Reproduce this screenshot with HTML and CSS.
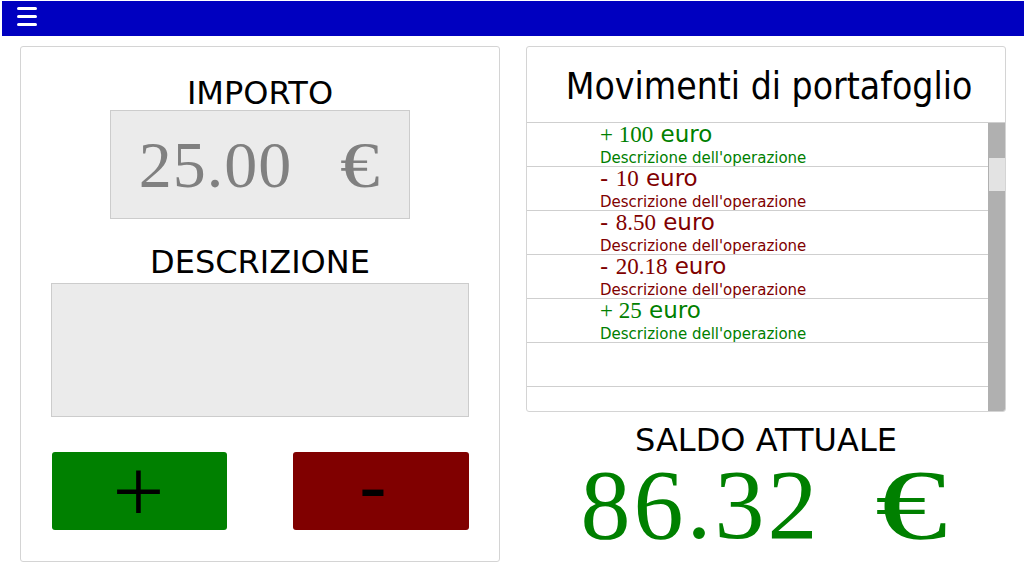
FILE: index.html
```html
<!DOCTYPE html>
<html lang="it">
<head>
<meta charset="utf-8">
<title>Portafoglio</title>
<link rel="stylesheet" href="styles.css">
</head>
<body>
<header class="topbar">
  <div class="menu"><span></span><span></span><span></span></div>
</header>
<main class="main">
  <section class="card left">
    <h2 class="label">IMPORTO</h2>
    <div class="amount-input"><span class="num">25.00</span><span class="cur">€</span></div>
    <h2 class="label desc-label">DESCRIZIONE</h2>
    <div class="desc-input"></div>
    <div class="buttons">
      <button class="btn plus">+</button>
      <button class="btn minus">-</button>
    </div>
  </section>
  <div class="right">
    <section class="card movements">
      <div class="mov-title">Movimenti di portafoglio</div>
      <div class="mov-body">
        <ul class="mov-list">
          <li class="in"><div class="amt"><span class="n">+ 100</span> euro</div><div class="desc">Descrizione dell'operazione</div></li>
          <li class="out"><div class="amt">- <span class="n">10</span> euro</div><div class="desc">Descrizione dell'operazione</div></li>
          <li class="out"><div class="amt">- <span class="n">8.50</span> euro</div><div class="desc">Descrizione dell'operazione</div></li>
          <li class="out"><div class="amt">- <span class="n">20.18</span> euro</div><div class="desc">Descrizione dell'operazione</div></li>
          <li class="in"><div class="amt"><span class="n">+ 25</span> euro</div><div class="desc">Descrizione dell'operazione</div></li>
          <li></li>
          <li></li>
        </ul>
        <div class="scrollbar"><div class="thumb"></div></div>
      </div>
    </section>
    <div class="balance-label">SALDO ATTUALE</div>
    <div class="balance"><span class="num">86.32</span><span class="cur">€</span></div>
  </div>
</main>
</body>
</html>
```
FILE: styles.css
```css
body {
  margin: 0;
  font-family: "DejaVu Sans", sans-serif;
  background: #ffffff;
  color: #000000;
}

.topbar {
  margin: 1px 0 0 2px;
  height: 35px;
  background: #0000c0;
  padding: 6px 0 0 15px;
  box-sizing: border-box;
}

.menu {
  display: flex;
  flex-direction: column;
  gap: 5px;
}

.menu span {
  display: block;
  width: 20px;
  height: 3px;
  border-radius: 2px;
  background: #ffffff;
}

.main {
  display: flex;
  gap: 26px;
  padding: 10px 0 0 20px;
}

.card {
  border: 1px solid #d4d4d4;
  border-radius: 3px;
  box-sizing: border-box;
  width: 480px;
  background: #ffffff;
}

.left {
  height: 516px;
  padding: 29px 30px 0 30px;
  display: flex;
  flex-direction: column;
  align-items: center;
}

.label {
  margin: 0;
  font-size: 32px;
  font-weight: normal;
  line-height: 34px;
  text-align: center;
}

.amount-input {
  width: 300px;
  height: 109px;
  box-sizing: border-box;
  border: 1px solid #cccccc;
  background: #ebebeb;
  line-height: 107px;
  text-align: center;
  font-family: "Liberation Serif", serif;
  font-size: 66px;
  color: #808080;
  white-space: nowrap;
}

.amount-input .num {
  letter-spacing: 1px;
}

.amount-input .cur {
  display: inline-block;
  margin-left: 48px;
  margin-right: 8px;
  transform: scaleX(1.2);
  transform-origin: left center;
}

.desc-label {
  margin-top: 26px;
}

.desc-input {
  margin-top: 4px;
  width: 418px;
  height: 134px;
  box-sizing: border-box;
  border: 1px solid #cccccc;
  background: #ebebeb;
}

.buttons {
  margin-top: 35px;
  width: 418px;
  box-sizing: border-box;
  padding-left: 1px;
  display: flex;
  justify-content: space-between;
}

.btn {
  height: 78px;
  border: none;
  border-radius: 3px;
  padding: 0;
  display: flex;
  align-items: center;
  justify-content: center;
  color: #000000;
}

.plus {
  width: 175px;
  background: #008000;
  font-family: "Liberation Serif", serif;
  font-size: 92px;
  line-height: 78px;
  padding-right: 2px;
}

.minus {
  width: 176px;
  background: #800000;
  font-family: "DejaVu Sans", sans-serif;
  font-size: 80px;
  line-height: 78px;
  padding: 0 16px 6px 0;
}

.right {
  width: 480px;
  display: flex;
  flex-direction: column;
}

.movements {
  height: 366px;
  display: flex;
  flex-direction: column;
  overflow: hidden;
}

.mov-title {
  font-family: "DejaVu Sans Condensed", "DejaVu Sans", sans-serif;
  font-stretch: condensed;
  font-size: 37px;
  line-height: 44px;
  padding: 18px 0 13px 6px;
  text-align: center;
  border-bottom: 1px solid #cfcfcf;
  white-space: nowrap;
}

.mov-body {
  display: flex;
  flex: 1;
  min-height: 0;
}

.mov-list {
  flex: 1;
  list-style: none;
  margin: 0;
  padding: 0;
  overflow: hidden;
}

.mov-list li {
  height: 43px;
  flex-shrink: 0;
  border-bottom: 1px solid #cfcfcf;
  padding-left: 73px;
}

.amt {
  height: 22px;
  font-size: 23px;
  line-height: 22px;
  white-space: nowrap;
}

.amt .n {
  font-family: "Liberation Serif", serif;
}

.desc {
  font-size: 15px;
  line-height: 16px;
  margin-top: 5px;
  white-space: nowrap;
}

.in {
  color: #008000;
}

.out {
  color: #800000;
}

.scrollbar {
  width: 17px;
  background: #b0b0b0;
}

.thumb {
  margin: 35px 0 0 1px;
  width: 16px;
  height: 33px;
  background: #e3e3e3;
}

.balance-label {
  margin-top: 11px;
  font-size: 32px;
  line-height: 34px;
  text-align: center;
}

.balance {
  font-family: "Liberation Serif", serif;
  font-size: 100px;
  line-height: 96px;
  color: #008000;
  text-align: center;
  white-space: nowrap;
}

.balance .num {
  letter-spacing: 3px;
}

.balance .cur {
  display: inline-block;
  margin-left: 54px;
  margin-right: 27px;
  transform: scaleX(1.45);
  transform-origin: left center;
}
```
